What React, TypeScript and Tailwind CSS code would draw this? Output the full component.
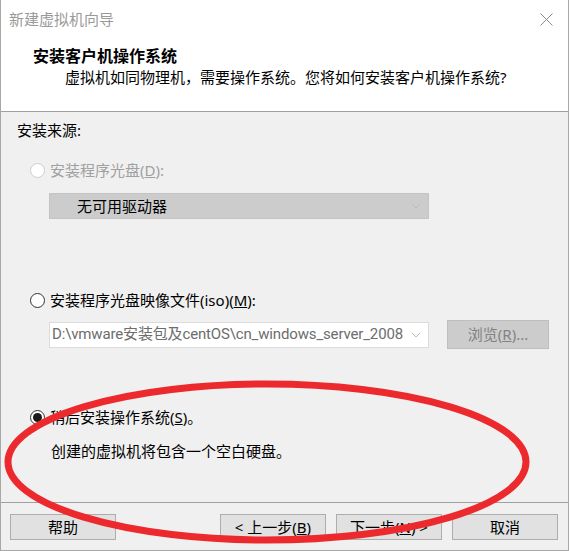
import React from "react";

const FONT = { fontFamily: '"Noto Sans", "Noto Sans CJK SC", sans-serif' };
const NARROW = { fontFamily: 'Roboto, "Noto Sans CJK SC", sans-serif' };

function Radio({ checked, disabled }: { checked?: boolean; disabled?: boolean }) {
  return (
    <span
      className={`w-[15px] h-[15px] rounded-full border flex items-center justify-center bg-white shrink-0 ${
        disabled ? "border-[#cccccc]" : "border-[#333333]"
      }`}
    >
      {checked && <span className="w-[9px] h-[9px] rounded-full bg-[#1a1a1a]" />}
    </span>
  );
}

function Chevron() {
  return (
    <svg width="10" height="6" viewBox="0 0 10 6" className="shrink-0">
      <path d="M1 1 L5 5 L9 1" fill="none" stroke="#bdbdbd" strokeWidth="1" />
    </svg>
  );
}

function Btn({ children }: { children: React.ReactNode }) {
  return (
    <button className="h-[26px] w-[106px] bg-[#e1e1e1] border border-[#adadad] text-[15px] leading-none text-black flex items-center justify-center">
      {children}
    </button>
  );
}

export default function App() {
  return (
    <div className="relative w-[570px] h-[551px] overflow-hidden bg-white" style={FONT}>
      <div className="w-[569px] h-[551px] flex flex-col border-x border-b border-[#a8a8a8]">
        {/* header */}
        <div className="h-[112px] bg-white border-b border-[#a0a0a0] shrink-0">
          <div className="h-[38px] flex items-center justify-between pl-[8px] pr-[15px]">
            <span className="text-[15px] text-[#9a9a9a]">新建虚拟机向导</span>
            <svg width="13" height="13" viewBox="0 0 13 13">
              <path d="M0.5 0.5 L12.5 12.5 M12.5 0.5 L0.5 12.5" stroke="#8a8a8a" strokeWidth="1" />
            </svg>
          </div>
          <div className="mt-[8px] pl-[32px] h-[20px] leading-[20px] text-[16px] font-bold text-black">
            安装客户机操作系统
          </div>
          <div className="mt-[1px] pl-[64px] h-[20px] leading-[20px] text-[15px] text-black">
            虚拟机如同物理机，需要操作系统。您将如何安装客户机操作系统?
          </div>
        </div>

        {/* body */}
        <div className="flex-1 bg-[#f0f0f0] pl-[16px] pt-[8px]">
          <div className="h-[20px] leading-[20px] text-[15px] text-black">安装来源:</div>

          <div className="mt-[20px] ml-[13px] h-[20px] flex items-center gap-[5px]">
            <Radio disabled />
            <span className="text-[15px] text-[#a0a0a0]">
              安装程序光盘(<span className="underline">D</span>):
            </span>
          </div>

          <div className="mt-[13px] ml-[32px] w-[380px] h-[26px] bg-[#cccccc] border border-[#c4c4c4] flex items-center justify-between pl-[27px] pr-[7px]">
            <span className="text-[15px] text-black">无可用驱动器</span>
            <Chevron />
          </div>

          <div className="mt-[71px] ml-[13px] h-[20px] flex items-center gap-[5px]">
            <Radio />
            <span className="text-[15px] text-black">
              安装程序光盘映像文件(iso)(<span className="underline">M</span>):
            </span>
          </div>

          <div className="mt-[10px] ml-[32px] h-[29px] flex items-center gap-[18px]">
            <div className="w-[380px] h-[26px] bg-white border border-[#dcdcdc] flex items-center justify-between pl-[2px] pr-[7px]">
              <span className="text-[15px] tracking-[-0.15px] text-[#6d6d6d] whitespace-nowrap" style={NARROW}>
                D:\vmware安装包及centOS\cn_windows_server_2008
              </span>
              <Chevron />
            </div>
            <div className="w-[102px] h-[29px] bg-[#cccccc] border border-[#bfbfbf] flex items-center justify-center text-[15px] text-[#838383]">
              浏览(<span className="underline">R</span>)...
            </div>
          </div>

          <div className="mt-[58px] ml-[13px] h-[20px] flex items-center gap-[5px]">
            <Radio checked />
            <span className="text-[15px] text-black">
              稍后安装操作系统(<span className="underline">S</span>)。
            </span>
          </div>

          <div className="mt-[14px] ml-[34px] h-[20px] leading-[20px] text-[15px] text-black">
            创建的虚拟机将包含一个空白硬盘。
          </div>
        </div>

        {/* footer */}
        <div className="h-[48px] bg-[#f0f0f0] border-t border-[#a0a0a0] shrink-0 flex items-start pt-[11px] pl-[9px]">
          <Btn>帮助</Btn>
          <div className="ml-[104px]">
            <Btn>
              &lt; 上一步(<span className="underline">B</span>)
            </Btn>
          </div>
          <div className="ml-[10px]">
            <Btn>
              下一步(<span className="underline">N</span>) &gt;
            </Btn>
          </div>
          <div className="ml-[10px]">
            <Btn>取消</Btn>
          </div>
        </div>
      </div>

      {/* red annotation ellipse */}
      <svg className="absolute left-0 top-0 pointer-events-none" width="570" height="551">
        <ellipse cx="267" cy="462" rx="259" ry="78" fill="none" stroke="#ec2a2d" strokeWidth="7" />
      </svg>
    </div>
  );
}
